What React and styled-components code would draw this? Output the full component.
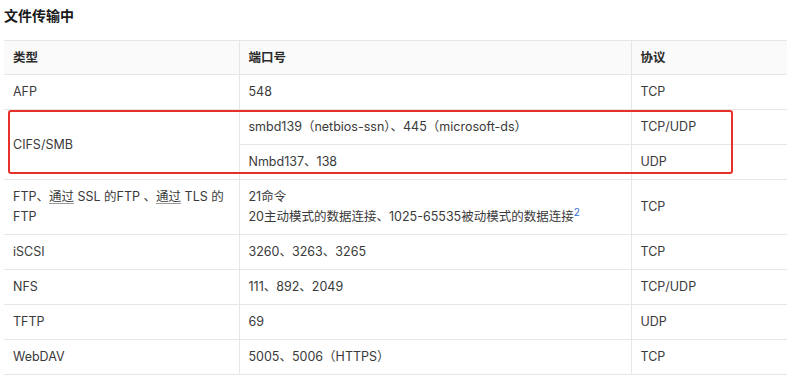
import React from "react";
import styled, { createGlobalStyle } from "styled-components";

const Global = createGlobalStyle`
  html, body { margin: 0; padding: 0; background: #fff; }
  body { font-family: Inter, "Noto Sans CJK SC", "Noto Sans", sans-serif; }
`;

const Page = styled.div`
  position: relative;
  width: 800px;
  height: 383px;
  padding: 6px 13px 0 4px;
  box-sizing: border-box;
  overflow: hidden;
`;

const Title = styled.h3`
  margin: 0;
  font-size: 14px;
  line-height: 20px;
  font-weight: 700;
  color: #1a1a1a;
  height: 34px;
`;

const Table = styled.table`
  width: 783px;
  border-collapse: collapse;
  table-layout: fixed;
  font-size: 12.5px;
  color: #3a3a3a;
`;

const Th = styled.th`
  text-align: left;
  font-weight: 600;
  font-size: 12.5px;
  color: #2a2a2a;
  padding: 7px 9px;
  line-height: 19px;
  border-top: 1px solid #e6e6e6;
  border-bottom: 1px solid #e6e6e6;
  border-left: ${(p) => (p.$first ? "none" : "1px solid #e6e6e6")};
  background: #fafafa;
`;

const Td = styled.td`
  padding: 7px 9px;
  line-height: 20px;
  vertical-align: middle;
  border-bottom: 1px solid #e6e6e6;
  border-left: ${(p) => (p.$first ? "none" : "1px solid #e6e6e6")};
`;

const Link = styled.span`
  text-decoration: underline;
  text-decoration-color: #9a9a9a;
  text-underline-offset: 2px;
`;

const Sup = styled.sup`
  color: #2f6fd6;
  font-size: 10px;
  line-height: 0;
`;

const Highlight = styled.div`
  position: absolute;
  left: 8px;
  top: 110px;
  width: 725px;
  height: 64px;
  border: 2px solid #e8302a;
  border-radius: 3px;
  box-sizing: border-box;
  pointer-events: none;
`;

const rows = [
  ["iSCSI", "3260、3263、3265", "TCP"],
  ["NFS", "111、892、2049", "TCP/UDP"],
  ["TFTP", "69", "UDP"],
  ["WebDAV", "5005、5006（HTTPS）", "TCP"],
];

export default function App() {
  return (
    <>
      <Global />
      <Page>
        <Title>文件传输中</Title>
        <Table>
          <colgroup>
            <col style={{ width: "235px" }} />
            <col style={{ width: "392px" }} />
            <col />
          </colgroup>
          <thead>
            <tr>
              <Th $first>类型</Th>
              <Th>端口号</Th>
              <Th>协议</Th>
            </tr>
          </thead>
          <tbody>
            <tr>
              <Td $first>AFP</Td>
              <Td>548</Td>
              <Td>TCP</Td>
            </tr>
            <tr>
              <Td $first rowSpan={2}>CIFS/SMB</Td>
              <Td>smbd139（netbios-ssn）、445（microsoft-ds）</Td>
              <Td>TCP/UDP</Td>
            </tr>
            <tr>
              <Td>Nmbd137、138</Td>
              <Td>UDP</Td>
            </tr>
            <tr>
              <Td $first>
                FTP、<Link>通过</Link> SSL 的FTP 、<Link>通过</Link> TLS 的 FTP
              </Td>
              <Td>
                21命令
                <br />
                20主动模式的数据连接、1025-65535被动模式的数据连接<Sup>2</Sup>
              </Td>
              <Td>TCP</Td>
            </tr>
            {rows.map(([a, b, c]) => (
              <tr key={a}>
                <Td $first>{a}</Td>
                <Td>{b}</Td>
                <Td>{c}</Td>
              </tr>
            ))}
          </tbody>
        </Table>
        <Highlight />
      </Page>
    </>
  );
}
